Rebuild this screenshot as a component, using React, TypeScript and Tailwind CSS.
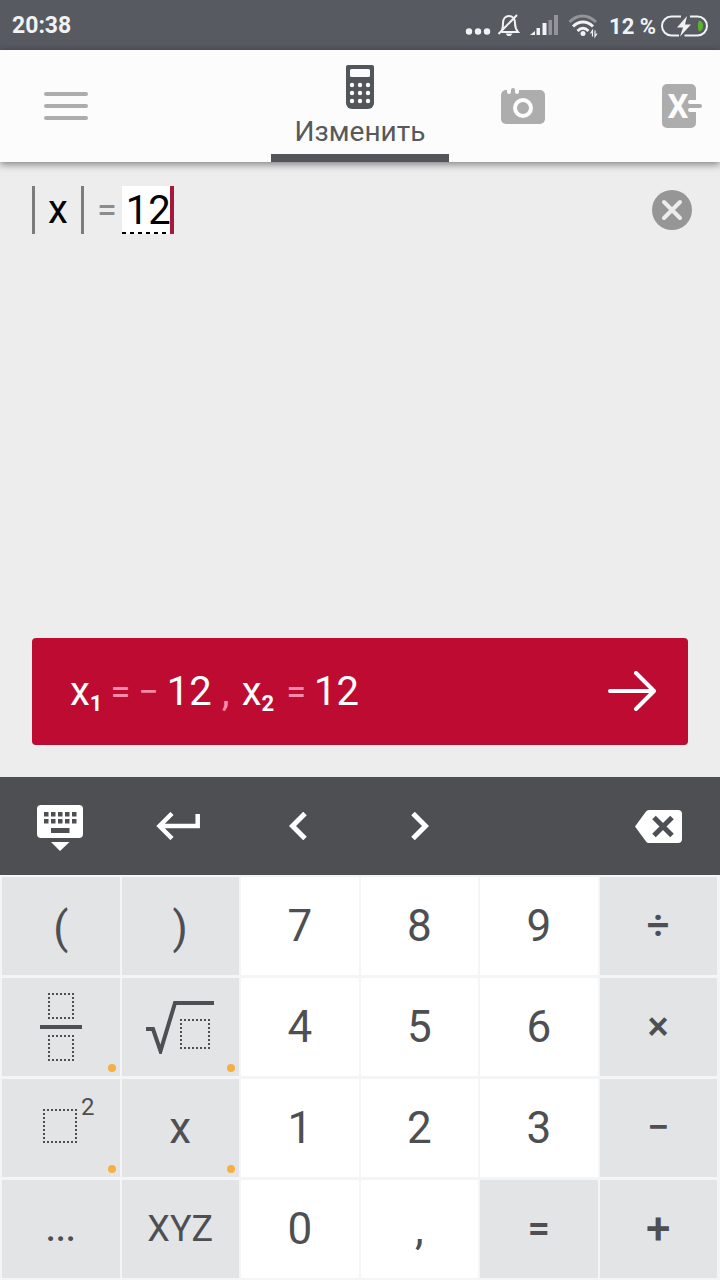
import type { ReactNode } from "react";

type KeyProps = {
    label: string;
    children?: ReactNode;
    light?: boolean;
    more?: boolean;
    size?: string;
};

function Key({ label, children, light, more, size = "text-[44px]" }: KeyProps) {
    return (
        <button
            type="button"
            aria-label={label}
            className={`relative flex h-[98px] items-center justify-center leading-none ${size} ${light ? "bg-white" : "bg-[#e3e4e6]"}`}
        >
            {children ?? label}
            {more && <span className="absolute right-1 bottom-1 size-2 rounded-full bg-[#f5b041]" />}
        </button>
    );
}

function StatusIcons() {
    return (
        <svg width="136" height="28" viewBox="464 12 136 28" fill="none" aria-hidden="true">
            <g fill="#f0f2f4">
                <circle cx="468" cy="31.500" r="3.200" />
                <circle cx="477" cy="31.500" r="3.200" />
                <circle cx="486" cy="31.500" r="3.200" />
            </g>
            <path d="M500.500 32h16.500c-2.500-3-3-6-3-9 0-4-2.500-7-6-7s-6 3-6 7c0 3 0 6-2 9M497.500 34l18.500-19" stroke="#f0f2f4" strokeWidth="2" />
            <path d="M504.500 33.500h7l-2 2.500h-3z" fill="#f0f2f4" />
            <g fill="#f0f2f4">
                <path d="M529 35l5-4v4z" />
                <rect x="535.500" y="28" width="3.500" height="7" />
                <rect x="541.500" y="23" width="4" height="12" />
            </g>
            <g fill="#92949a">
                <rect x="547.500" y="20" width="3.500" height="15" />
                <rect x="553" y="15" width="4" height="20" />
            </g>
            <path d="M568.500 22c8-8 18-8 26.500 0" stroke="#92949a" strokeWidth="3" />
            <path d="M572 26.500c6-6 14-6 20 0M576.500 31c3.500-3.500 7.500-3.500 11 0" stroke="#f0f2f4" strokeWidth="3" />
            <circle cx="582" cy="33.500" r="2.500" fill="#f0f2f4" />
            <path d="M589.500 33.500l2-3v6M596 33.500l-2 3v-6" stroke="#f0f2f4" strokeWidth="1.200" />
        </svg>
    );
}

function BatteryIcon() {
    return (
        <svg width="48" height="24" viewBox="0 0 48 24" fill="none" aria-hidden="true">
            <path d="M21 2.500h-9.500a9.500 9.500 0 0 0 0 19h7.500M30 2.500h7.500a9.500 9.500 0 0 1 0 19h-13" stroke="#f0f2f4" strokeWidth="2" />
            <path d="M39 6.500c5.500 1 5.500 10 0 11-1.500-3-1.500-8 0-11z" fill="#58b62c" />
            <path d="M27 2L17 13.500h6L20 22.500 31 10.500h-6z" fill="#f0f2f4" />
        </svg>
    );
}

function CalculatorIcon() {
    return (
        <svg width="28" height="44" viewBox="0 0 28 44" aria-hidden="true">
            <path d="M2 0h24a2 2 0 0 1 2 2v36a6 6 0 0 1-6 6H6a6 6 0 0 1-6-6V2a2 2 0 0 1 2-2z" fill="#525559" />
            <rect x="4" y="4" width="20" height="8" rx="1.500" fill="#fcfcfc" />
            {[20, 28, 36].map((y) => [6, 14, 22].map((x) => <circle key={`${x}-${y}`} cx={x} cy={y} r="2.200" fill="#fcfcfc" />))}
        </svg>
    );
}

function CameraIcon() {
    return (
        <svg width="44" height="36" viewBox="0 0 44 36" aria-hidden="true">
            <rect y="2" width="44" height="34" rx="5" fill="#adadad" />
            <path d="M6 0h12v4a2 2 0 0 1-4 0V2a2 2 0 0 0-4 0v2a2 2 0 0 1-4 0z" fill="#fcfcfc" />
            <path d="M10 5V2a2 2 0 0 1 4 0v3z" fill="#adadad" />
            <circle cx="22" cy="20" r="8" fill="none" stroke="#fcfcfc" strokeWidth="4" />
        </svg>
    );
}

function SolveIcon() {
    return (
        <svg width="40" height="44" viewBox="0 0 40 44" aria-hidden="true">
            <rect width="34" height="44" rx="5" fill="#adadad" />
            <path d="M36 18h-8M36 26h-8" stroke="#fcfcfc" strokeWidth="4" strokeLinecap="round" />
            <path d="M28 22h10" stroke="#adadad" strokeWidth="4" strokeLinecap="round" />
            <text x="16" y="34" textAnchor="middle" fontSize="33" fontWeight="700" fill="#fcfcfc">X</text>
        </svg>
    );
}

function KeyboardIcon() {
    return (
        <svg width="46" height="46" viewBox="0 0 46 46" aria-hidden="true">
            <rect width="46" height="33" rx="4" fill="#fff" />
            {[7, 14].map((y) => [7, 14, 21, 28, 35].map((x) => <rect key={`${x}-${y}`} x={x} y={y} width="4.500" height="4.500" fill="#4d4f53" />))}
            <path d="M14 23h18.500v5H14z" fill="#4d4f53" />
            <path d="M14 37h18.500L23 46z" fill="#fff" />
        </svg>
    );
}

function FractionIcon() {
    return (
        <svg width="42" height="70" viewBox="0 0 42 70" fill="none" stroke="#4d4f53" aria-hidden="true">
            <path d="M8 2h26M8 26h26M8 44h26M8 68h26" strokeWidth="2" strokeDasharray="2 2" />
            <path d="M9 1v26M33 1v26M9 43v26M33 43v26" strokeWidth="2" strokeDasharray="2 2" />
            <path d="M0 35h42" strokeWidth="4" />
        </svg>
    );
}

function RootIcon() {
    return (
        <svg width="68" height="54" viewBox="0 0 68 54" fill="none" stroke="#4d4f53" aria-hidden="true">
            <path d="M0 29h7l7.500 22L29 3h39" strokeWidth="4" />
            <path d="M34 20h30M34 48h30M35 19v30M63 19v30" strokeWidth="2" strokeDasharray="2 2" />
        </svg>
    );
}

function SquareIcon() {
    return (
        <svg width="34" height="34" viewBox="0 0 34 34" fill="none" stroke="#4d4f53" aria-hidden="true">
            <path d="M0 1h34M0 33h34M1 0v34M33 0v34" strokeWidth="2" strokeDasharray="2 2" />
        </svg>
    );
}

export default function App() {
    return (
        <div className="flex min-h-screen flex-col bg-[#ededed] font-[Roboto,sans-serif] text-[#4d4f53]">
            <div className="flex h-[50px] items-center bg-[#575a61] px-3 pt-[2px] text-[23px] font-bold text-[#f0f2f4]">
                <span>20:38</span>
                <div className="ml-auto flex items-center">
                    <StatusIcons />
                    <span className="ml-2 text-[22px]">12 %</span>
                    <span className="ml-1"><BatteryIcon /></span>
                </div>
            </div>

            <header className="z-10 grid h-28 grid-cols-[1fr_178px_1fr] bg-[#fcfcfc] shadow-[0_2px_8px_rgba(0,0,0,0.5)]">
                <div className="flex items-center pl-11">
                    <button type="button" aria-label="Меню" className="flex flex-col gap-2">
                        <span className="h-1 w-11 rounded-full bg-[#adadad]" />
                        <span className="h-1 w-11 rounded-full bg-[#adadad]" />
                        <span className="h-1 w-11 rounded-full bg-[#adadad]" />
                    </button>
                </div>
                <button type="button" className="flex flex-col items-center border-b-8 border-[#525559] pt-[15px] text-[28px] leading-[45px] text-[#58595b]">
                    <CalculatorIcon />
                    Изменить
                </button>
                <div className="flex items-center justify-between pr-[18px] pl-[52px]">
                    <button type="button" aria-label="Камера"><CameraIcon /></button>
                    <button type="button" aria-label="Решение"><SolveIcon /></button>
                </div>
            </header>

            <main className="flex flex-1 flex-col px-8 pt-6 pb-8">
                <div className="flex items-center justify-between">
                    <div className="flex h-12 items-center text-[40px] leading-none text-black">
                        <span className="flex h-12 items-center border-x-[3px] border-[#7c7c7c] px-[13px]">x</span>
                        <span className="ml-2 w-[30px] text-center text-[36px] text-[#8c8c8c]">=</span>
                        <input
                            aria-label="Правая часть"
                            defaultValue="12"
                            className="h-12 w-12 bg-white bg-[repeating-linear-gradient(90deg,#000_0_4px,#fff_4px_8px)] bg-[length:100%_2px] bg-bottom bg-no-repeat pl-1 outline-none"
                        />
                        <span className="h-12 w-1 bg-[#a6193a]" />
                    </div>
                    <button type="button" aria-label="Очистить" className="-mr-1">
                        <svg width="40" height="40" viewBox="0 0 40 40" aria-hidden="true">
                            <circle cx="20" cy="20" r="20" fill="#969696" />
                            <path d="M12 12l16 16M28 12L12 28" stroke="#ededed" strokeWidth="4" strokeLinecap="round" />
                        </svg>
                    </button>
                </div>

                <button type="button" className="mt-auto flex h-[107px] items-center rounded bg-[#be0b32] pr-8 pl-[38px] text-[40px] leading-none text-white">
                    <span>x<sub className="bottom-[-6px] text-[22px] font-bold">1</sub></span>
                    <span className="ml-2 text-[36px] text-[#f78aa6]">=</span>
                    <span className="ml-2 text-[36px] text-[#f78aa6]">−</span>
                    <span className="ml-2">12</span>
                    <span className="ml-[10px] text-[#f78aa6]">,</span>
                    <span className="ml-3">x<sub className="bottom-[-6px] text-[22px] font-bold">2</sub></span>
                    <span className="ml-3 text-[36px] text-[#f78aa6]">=</span>
                    <span className="ml-2">12</span>
                    <svg width="48" height="42" viewBox="0 0 48 42" fill="none" aria-hidden="true" className="ml-auto">
                        <path d="M2 20h43M28 2l18 18-18 18" stroke="#fff" strokeWidth="4" strokeLinecap="round" strokeLinejoin="round" />
                    </svg>
                </button>
            </main>

            <div className="grid h-[98px] grid-cols-6 items-center justify-items-center bg-[#4d4f53]">
                <button type="button" aria-label="Скрыть клавиатуру" className="pt-1"><KeyboardIcon /></button>
                <button type="button" aria-label="Новая строка" className="pr-1">
                    <svg width="44" height="28" viewBox="0 0 44 28" fill="none" stroke="#fff" strokeWidth="4.500" aria-hidden="true">
                        <path d="M16 1.500L3.500 14 16 26.500M4 14h37.700V2" />
                    </svg>
                </button>
                <button type="button" aria-label="Влево" className="pr-1">
                    <svg width="18" height="28" viewBox="0 0 18 28" fill="none" stroke="#fff" strokeWidth="5" aria-hidden="true">
                        <path d="M16 1.500L3.500 14 16 26.500" />
                    </svg>
                </button>
                <button type="button" aria-label="Вправо">
                    <svg width="18" height="28" viewBox="0 0 18 28" fill="none" stroke="#fff" strokeWidth="5" aria-hidden="true">
                        <path d="M2 1.500L14.500 14 2 26.500" />
                    </svg>
                </button>
                <button type="button" aria-label="Удалить" className="col-start-6 pr-1">
                    <svg width="47" height="33" viewBox="0 0 47 33" aria-hidden="true">
                        <path d="M0 16.500L11 1.500Q12 0 14 0h29a4 4 0 0 1 4 4v25a4 4 0 0 1-4 4H14q-2 0-3-1.500z" fill="#fff" />
                        <path d="M19 7.500l18 18M37 7.500l-18 18" stroke="#4d4f53" strokeWidth="5" />
                    </svg>
                </button>
            </div>

            <div className="grid grid-cols-6 gap-x-[2px] gap-y-[3px] bg-[#f4f5f6] py-[2px] pr-[3px] pl-[2px]">
                <Key label="(" size="pt-1 text-[44px]" />
                <Key label=")" size="pt-1 text-[44px]" />
                <Key label="7" light />
                <Key label="8" light />
                <Key label="9" light />
                <Key label="÷" size="text-[40px] font-medium" />

                <Key label="Дробь" more><FractionIcon /></Key>
                <Key label="Корень" more><RootIcon /></Key>
                <Key label="4" light />
                <Key label="5" light />
                <Key label="6" light />
                <Key label="×" size="text-[40px] font-medium" />

                <Key label="Квадрат" more>
                    <span className="flex items-start gap-1 pb-[18px] pl-4">
                        <span className="pt-[14px]"><SquareIcon /></span>
                        <span className="text-[24px] leading-6">2</span>
                    </span>
                </Key>
                <Key label="x" more />
                <Key label="1" light />
                <Key label="2" light />
                <Key label="3" light />
                <Key label="−" size="text-[40px] font-medium" />

                <Key label="Ещё" size="text-[36px] font-medium">...</Key>
                <Key label="XYZ" size="text-[36px]" />
                <Key label="0" light />
                <Key label="," light />
                <Key label="=" size="text-[40px] font-medium" />
                <Key label="+" size="text-[44px] font-medium" />
            </div>
        </div>
    );
}
